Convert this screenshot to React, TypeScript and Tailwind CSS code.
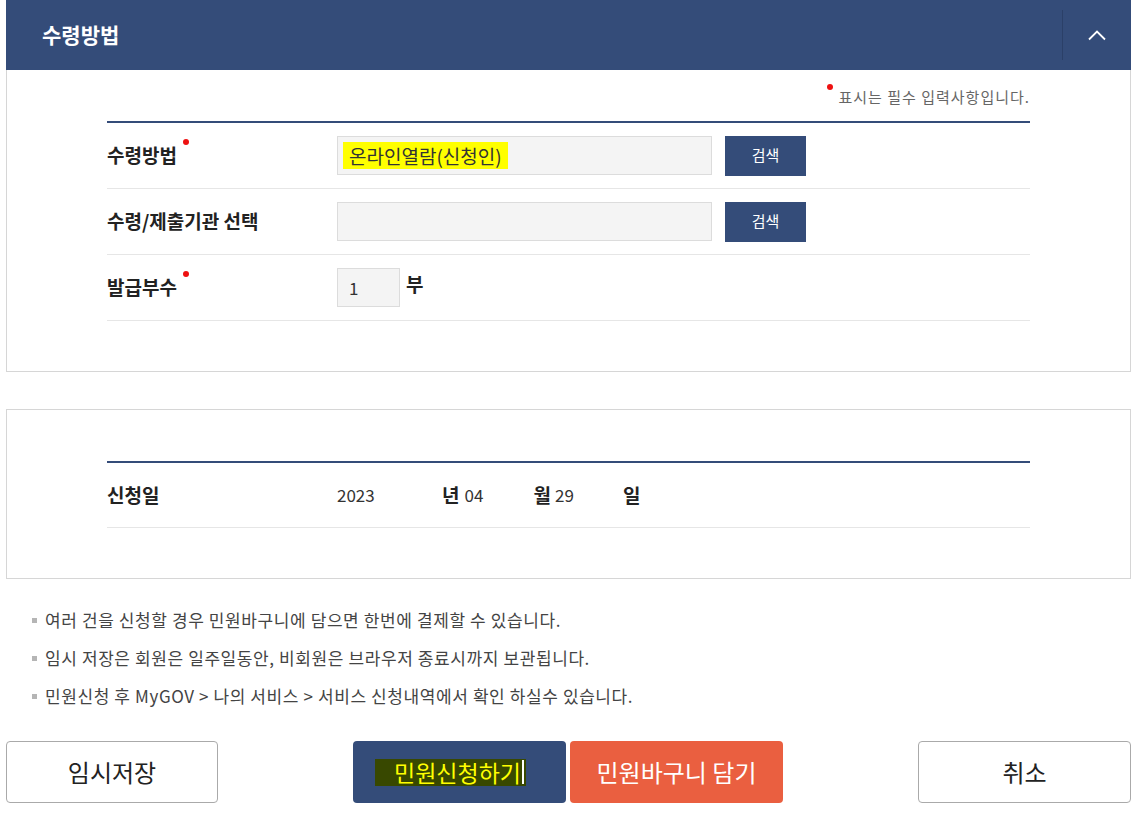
import React from "react";

const font = { fontFamily: '"Noto Sans CJK KR", "Noto Sans", sans-serif' };

const RequiredDot = () => (
  <span className="relative -top-[14px] ml-[6px] inline-block h-[6px] w-[6px] rounded-full bg-[#ee1111]" />
);

const Label: React.FC<{ text: string; required?: boolean }> = ({ text, required }) => (
  <div className="flex w-[230px] shrink-0 items-center text-[19px] font-bold text-[#222]">
    <span>{text}</span>
    {required && <RequiredDot />}
  </div>
);

const SearchButton = () => (
  <button className="ml-[13px] flex h-[40px] w-[81px] items-center justify-center bg-[#344c79] text-[15px] text-white">
    검색
  </button>
);

const notes = [
  "여러 건을 신청할 경우 민원바구니에 담으면 한번에 결제할 수 있습니다.",
  "임시 저장은 회원은 일주일동안, 비회원은 브라우저 종료시까지 보관됩니다.",
  "민원신청 후 MyGOV > 나의 서비스 > 서비스 신청내역에서 확인 하실수 있습니다.",
];

export default function App() {
  return (
    <div className="min-h-[833px] w-[1142px] bg-white pl-[6px]" style={font}>
      <div className="w-[1125px]">
        {/* Header */}
        <div className="flex h-[70px] items-center bg-[#344c79]">
          <h2 className="flex-1 pl-[36px] text-[21px] font-bold text-white">수령방법</h2>
          <div className="h-[50px] w-px bg-[#2b4068]" />
          <button className="flex h-[70px] w-[68px] items-center justify-center">
            <svg width="20" height="12" viewBox="0 0 20 12" fill="none">
              <path d="M2 10.5 L10 2.5 L18 10.5" stroke="white" strokeWidth="1.8" />
            </svg>
          </button>
        </div>

        {/* Panel 1 */}
        <div className="border-x border-b border-[#d6d6d6] pt-[17px] pb-[50px] pl-[100px] pr-[100px]">
          <div className="flex items-start justify-end text-[15px] tracking-[1px] text-[#666]">
            <span className="mt-[-3px] mr-[6px] inline-block h-[6px] w-[6px] rounded-full bg-[#ee1111]" />
            <span className="leading-[20px]">표시는 필수 입력사항입니다.</span>
          </div>
          <div className="mt-[14px] border-t-2 border-[#344c79]">
            <div className="flex h-[66px] items-center border-b border-[#e6e6e6]">
              <Label text="수령방법" required />
              <div className="flex h-[39px] w-[375px] items-center border border-[#dcdcdc] bg-[#f4f4f4] pl-[5px]">
                <span className="bg-[#ffff00] px-[6px] text-[19px] leading-[27px] text-[#333]">
                  온라인열람(신청인)
                </span>
              </div>
              <SearchButton />
            </div>
            <div className="flex h-[66px] items-center border-b border-[#e6e6e6]">
              <Label text="수령/제출기관 선택" />
              <div className="h-[39px] w-[375px] border border-[#dcdcdc] bg-[#f4f4f4]" />
              <SearchButton />
            </div>
            <div className="flex h-[66px] items-center border-b border-[#e6e6e6]">
              <Label text="발급부수" required />
              <div className="flex h-[39px] w-[63px] items-center border border-[#dcdcdc] bg-[#f4f4f4] pl-[11px] text-[17px] text-[#333]">
                1
              </div>
              <span className="ml-[6px] -mt-[7px] text-[19px] font-bold text-[#222]">부</span>
            </div>
          </div>
        </div>

        {/* Panel 2 */}
        <div className="mt-[37px] border border-[#d6d6d6] pt-[51px] pb-[50px] pl-[100px] pr-[100px]">
          <div className="border-t-2 border-[#344c79]">
            <div className="flex h-[65px] items-center border-b border-[#e6e6e6]">
              <Label text="신청일" />
              <div className="flex items-center text-[#333]">
                <span className="w-[105px] text-[17px]">2023</span>
                <span className="text-[19px] font-bold text-[#222]">년</span>
                <span className="ml-[5px] w-[69px] text-[17px]">04</span>
                <span className="text-[19px] font-bold text-[#222]">월</span>
                <span className="ml-[4px] w-[68px] text-[17px]">29</span>
                <span className="text-[19px] font-bold text-[#222]">일</span>
              </div>
            </div>
          </div>
        </div>

        {/* Notes */}
        <ul className="mt-[22px] pl-[26px]">
          {notes.map((n) => (
            <li key={n} className="flex h-[38px] items-center text-[17px] tracking-[0.6px] text-[#444]">
              <span className="mr-[8px] inline-block h-[5px] w-[5px] bg-[#b5b5b5]" />
              {n}
            </li>
          ))}
        </ul>

        {/* Buttons */}
        <div className="mt-[26px] flex items-center justify-between">
          <button className="h-[62px] w-[212px] rounded-[4px] border border-[#aaaaaa] bg-white text-[24px] text-[#222]">
            임시저장
          </button>
          <div className="flex gap-[4px]">
            <button className="flex h-[62px] w-[213px] items-center justify-start rounded-[4px] bg-[#344c79] pl-[22px]">
              <span className="flex items-center bg-[#384800] pl-[19px] pr-[2px] text-[23px] leading-[27px] text-[#ffff00]">
                민원신청하기
                <span className="ml-[1px] inline-block h-[24px] w-[2px] bg-white" />
              </span>
            </button>
            <button className="h-[62px] w-[213px] rounded-[4px] bg-[#ea5f40] text-[24px] text-white">
              민원바구니 담기
            </button>
          </div>
          <button className="h-[62px] w-[213px] rounded-[4px] border border-[#aaaaaa] bg-white text-[24px] text-[#222]">
            취소
          </button>
        </div>
      </div>
    </div>
  );
}
